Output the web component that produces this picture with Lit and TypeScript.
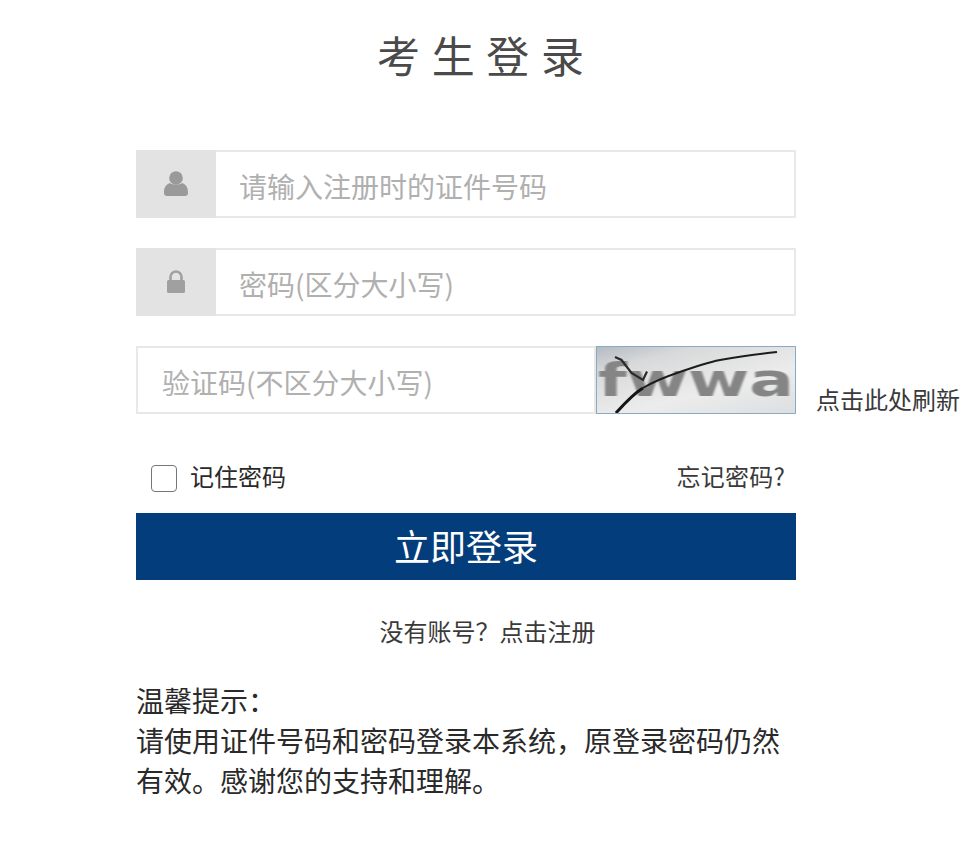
import { LitElement, html, css } from "lit";
import { customElement } from "lit/decorators.js";

@customElement("app-root")
export class AppRoot extends LitElement {
  static styles = css`
    :host {
      display: block;
      width: 977px;
      height: 855px;
      background: #fff;
      overflow: hidden;
      font-family: "Noto Sans CJK SC", "Noto Sans", sans-serif;
      color: #333;
    }
    * { box-sizing: border-box; }
    .page { width: 660px; margin-left: 136px; padding-top: 26px; }
    h1 {
      margin: 0 0 67px;
      width: 690px;
      text-align: center;
      font-size: 43px;
      line-height: 57px;
      font-weight: 400;
      color: #4a4a4a;
      white-space: pre;
      letter-spacing: 1px;
    }
    .row { display: flex; height: 68px; margin-bottom: 30px; }
    .addon {
      width: 80px; flex: none;
      background: #e3e3e3;
      display: flex; align-items: center; justify-content: center;
    }
    .addon svg { display: block; }
    input.text {
      flex: 1; min-width: 0; height: 100%;
      border: 2px solid #e8e8e8;
      outline: none;
      font: 400 28px "Noto Sans CJK SC", "Noto Sans", sans-serif;
      padding: 3px 0 0 22px;
      background: #fff;
    }
    .addon + input.text { border-left: 0; padding-left: 23px; }
    input.text::placeholder { color: #b0b0b0; opacity: 1; }
    .row.code { margin-bottom: 0; }
    .row.code input.text { flex: none; width: 460px; padding-left: 24px; }
    .captcha {
      width: 200px; height: 68px; flex: none;
      position: relative; overflow: hidden;
      border: 1px solid #8aa9c2;
      background: linear-gradient(165deg, #b4bbc2 0%, #d8d9da 22%, #ececec 62%, #dcdee0 100%);
    }
    .captcha span {
      position: absolute; left: 1px; top: 7px;
      font: 700 46px/52px "DejaVu Sans", sans-serif;
      color: #858585;
      transform: scaleX(1.44);
      transform-origin: 0 0;
      white-space: nowrap;
      filter: blur(0.6px);
    }
    .captcha svg { position: absolute; left: 0; top: 0; }
    .refresh {
      flex: none; align-self: flex-end;
      margin-left: 20px; margin-bottom: 1px;
      font-size: 24px; line-height: 28px; font-weight: 400;
      white-space: nowrap; color: #3a3a3a;
    }
    .opts {
      display: flex; align-items: center; justify-content: space-between;
      height: 99px; padding: 23px 11px 0 15px;
    }
    .opts label { display: flex; align-items: center; gap: 13px; font-size: 24px; font-weight: 400; color: #2a2a2a; }
    input.cb {
      appearance: none; margin: 7px 0 0; width: 26px; height: 27px;
      border: 1px solid #767676; border-radius: 4px; background: #fff;
    }
    .forgot { font-size: 24px; font-weight: 400; color: #3a3a3a; letter-spacing: 0.2px; }
    button {
      display: block; width: 100%; height: 67px;
      background: #033d7c;
      border: 0; color: #fff;
      font: 400 36px/65px "Noto Sans CJK SC", "Noto Sans", sans-serif;
      padding: 0 0 2px;
    }
    .reg {
      text-align: center; font-size: 24px; font-weight: 400; line-height: 34px;
      margin-top: 34px; padding-left: 43px; color: #3a3a3a;
    }
    .tip {
      margin-top: 32px; font-size: 28px; font-weight: 400; line-height: 40px; color: #2a2a2a;
    }
  `;

  render() {
    return html`
      <div class="page">
        <h1>考 生 登 录</h1>
        <div class="row">
          <div class="addon">
            <svg width="24" height="26" viewBox="0 0 24 26">
              <circle cx="12" cy="7" r="6.8" fill="#9a9a9a"/>
              <path d="M0 22c0-5 1-8 6-10 2 2 10 2 12 0 5 2 6 5 6 10 0 2-1 3-3 3H3c-2 0-3-1-3-3z" fill="#9a9a9a"/>
            </svg>
          </div>
          <input class="text" placeholder="请输入注册时的证件号码" />
        </div>
        <div class="row">
          <div class="addon">
            <svg width="20" height="24" viewBox="0 0 20 24">
              <path d="M4.5 11V7a5.5 5.5 0 0 1 11 0v4" fill="none" stroke="#a0a0a0" stroke-width="2.6"/>
              <rect x="1" y="10" width="18" height="13" rx="1.5" fill="#a0a0a0"/>
            </svg>
          </div>
          <input class="text" placeholder="密码(区分大小写)" />
        </div>
        <div class="row code">
          <input class="text" placeholder="验证码(不区分大小写)" />
          <div class="captcha">
            <span>fwwa</span>
            <svg width="198" height="66" viewBox="0 0 198 66">
              <path d="M18 10l6.500 3 10 13 11.500 7 4-8.500" fill="none" stroke="#2a2a2a" stroke-width="2.200"/>
              <path d="M19 66C28 56 36 47 46 41" fill="none" stroke="#151515" stroke-width="3"/>
              <path d="M46 41C56 35 68 30 80 26c14-5 28-10 43-13 18-3 38-6 57-8" fill="none" stroke="#1c1c1c" stroke-width="2"/>
            </svg>
          </div>
          <span class="refresh">点击此处刷新</span>
        </div>
        <div class="opts">
          <label><input class="cb" type="checkbox" />记住密码</label>
          <span class="forgot">忘记密码?</span>
        </div>
        <button>立即登录</button>
        <div class="reg">没有账号？点击注册</div>
        <div class="tip">温馨提示：<br />请使用证件号码和密码登录本系统，原登录密码仍然<br />有效。感谢您的支持和理解。</div>
      </div>
    `;
  }
}
